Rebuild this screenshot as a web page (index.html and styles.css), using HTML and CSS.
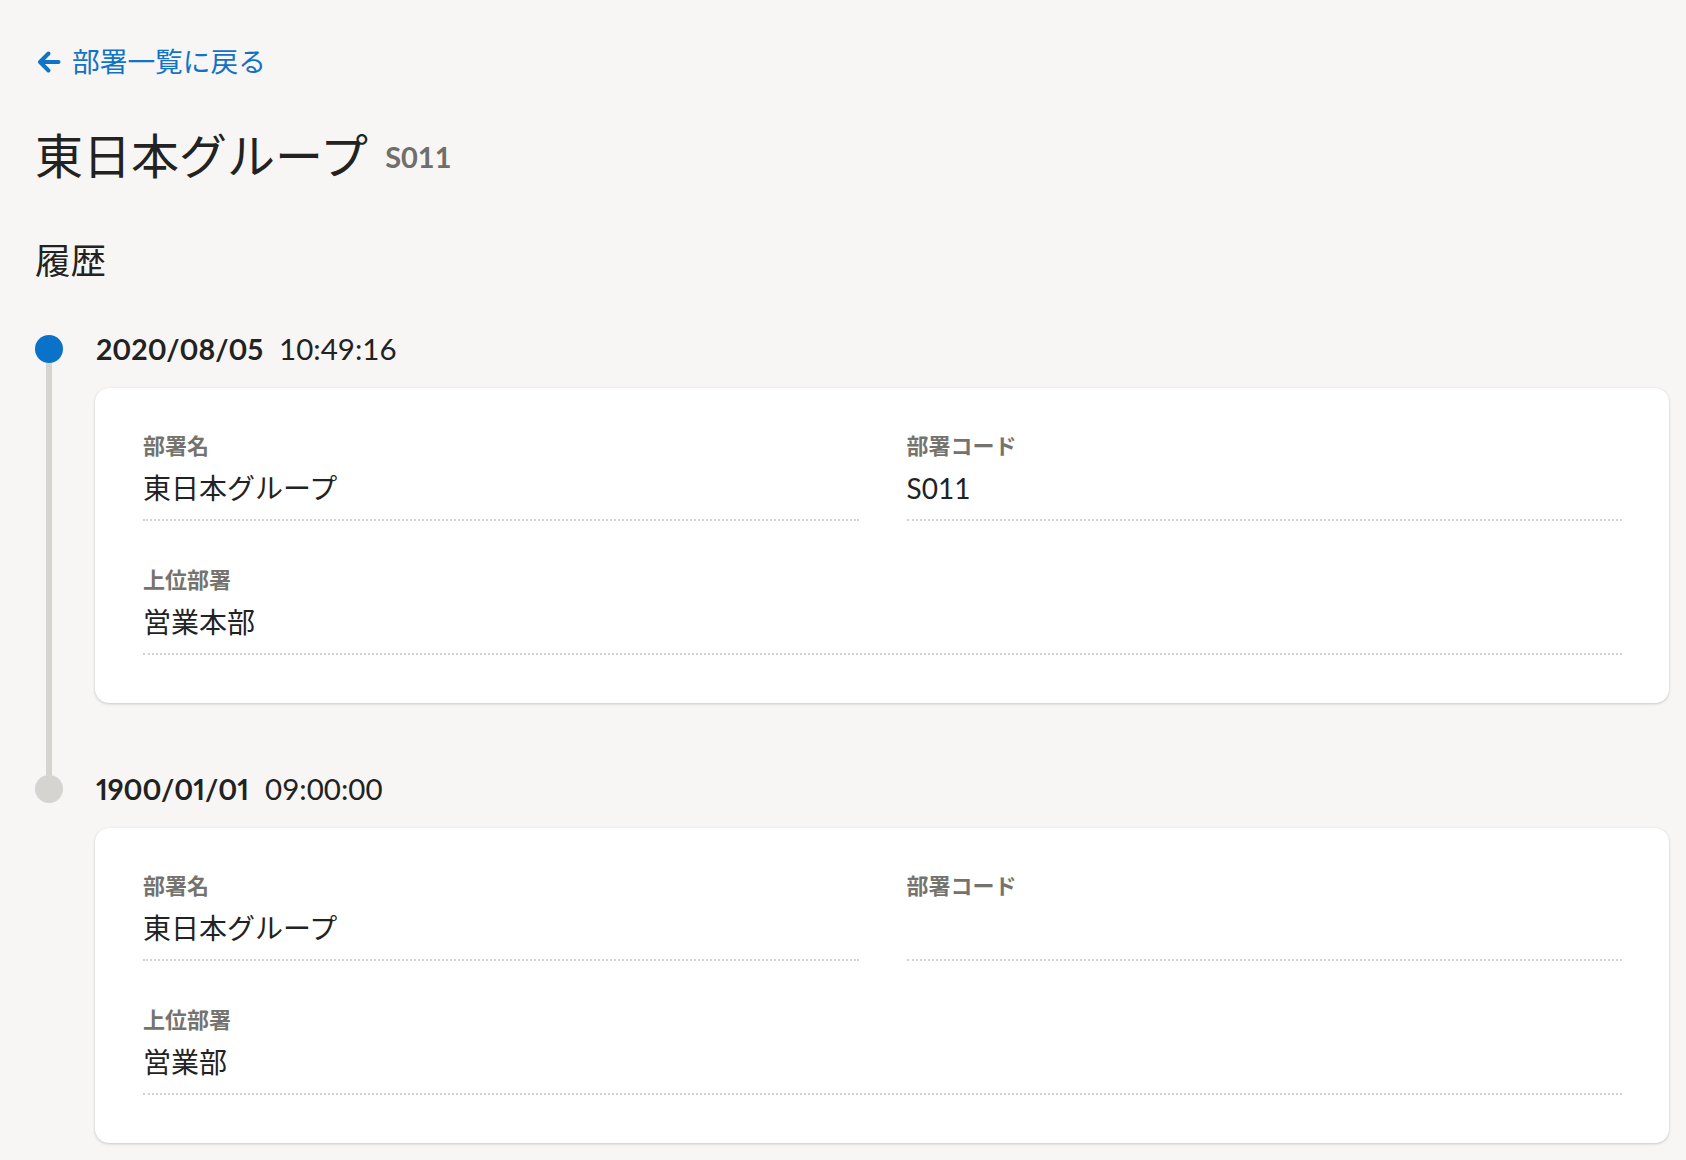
FILE: index.html
```html
<!DOCTYPE html>
<html lang="ja">
<head>
<meta charset="utf-8">
<title>東日本グループ - 履歴</title>
<link rel="stylesheet" href="styles.css">
</head>
<body>
<div class="page">
  <a class="back" href="#">
    <svg class="back-icon" viewBox="0 0 24 24" width="24" height="24" aria-hidden="true">
      <path d="M21.5 12H3.5M11.5 3.5L3 12L11.5 20.5" fill="none" stroke="currentColor" stroke-width="4" stroke-linecap="round" stroke-linejoin="round"/>
    </svg>
    <span>部署一覧に戻る</span>
  </a>
  <h1 class="title"><span class="title-name">東日本グループ</span><span class="title-code">S011</span></h1>
  <h2 class="section">履歴</h2>
  <ol class="timeline">
    <li class="entry entry--first">
      <div class="rail"><span class="rail-top"></span><span class="dot dot--current"></span><span class="rail-line"></span></div>
      <div class="entry-body">
        <div class="stamp"><span class="date">2020/08/05</span><span class="time">10:49:16</span></div>
        <div class="card">
          <dl class="fields">
            <div class="field"><dt>部署名</dt><dd>東日本グループ</dd></div>
            <div class="field"><dt>部署コード</dt><dd>S011</dd></div>
            <div class="field field--wide"><dt>上位部署</dt><dd>営業本部</dd></div>
          </dl>
        </div>
      </div>
    </li>
    <li class="entry entry--last">
      <div class="rail"><span class="rail-top"></span><span class="dot"></span><span class="rail-line"></span></div>
      <div class="entry-body">
        <div class="stamp"><span class="date">1900/01/01</span><span class="time">09:00:00</span></div>
        <div class="card">
          <dl class="fields">
            <div class="field"><dt>部署名</dt><dd>東日本グループ</dd></div>
            <div class="field"><dt>部署コード</dt><dd></dd></div>
            <div class="field field--wide"><dt>上位部署</dt><dd>営業部</dd></div>
          </dl>
        </div>
      </div>
    </li>
  </ol>
</div>
</body>
</html>
```

FILE: styles.css
```css
* { box-sizing: border-box; }

html, body {
  margin: 0;
  padding: 0;
  background: #f7f6f4;
}

body {
  font-family: Lato, "Noto Sans CJK JP", sans-serif;
  color: #222222;
}

.page {
  padding: 44px 17px 0 35px;
  display: flex;
  flex-direction: column;
  align-items: stretch;
}

.back {
  display: inline-flex;
  align-self: flex-start;
  align-items: center;
  gap: 11px;
  height: 36px;
  color: #1173c6;
  text-decoration: none;
  font-size: 27.7px;
  line-height: 36px;
  margin-left: 2px;
}

.back-icon {
  display: block;
  width: 24px;
  height: 24px;
}

.title {
  margin: 46px 0 0;
  height: 60px;
  display: flex;
  align-items: center;
  gap: 17px;
  font-weight: 400;
}

.title-name {
  font-size: 48px;
  line-height: 60px;
  color: #222222;
}

.title-code {
  font-size: 29px;
  font-weight: 700;
  color: #6f6e6a;
  line-height: 60px;
  padding-top: 2px;
}

.section {
  margin: 53px 0 0;
  font-size: 35.5px;
  line-height: 44px;
  font-weight: 400;
  color: #222222;
}

.timeline {
  list-style: none;
  margin: 46px 0 0;
  padding: 0;
}

.entry {
  display: grid;
  grid-template-columns: 28px 1fr;
  column-gap: 32px;
}

.rail {
  display: flex;
  flex-direction: column;
  align-items: center;
}

.rail-top {
  width: 6px;
  height: 6px;
  flex: 0 0 6px;
  background: #d5d4d1;
}

.entry--first .rail-top { background: transparent; }

.dot {
  width: 28px;
  height: 28px;
  flex: 0 0 28px;
  border-radius: 50%;
  background: #d5d4d1;
}

.dot--current { background: #0a72c8; }

.rail-line {
  width: 6px;
  flex: 1 1 auto;
  background: #d5d4d1;
}

.entry--last .rail-line { background: transparent; }

.entry-body {
  display: flex;
  flex-direction: column;
  gap: 19px;
  padding-bottom: 66px;
}

.entry--last .entry-body { padding-bottom: 20px; }

.stamp {
  height: 40px;
  display: flex;
  align-items: center;
  gap: 16px;
  padding-left: 1px;
  line-height: 40px;
  color: #222222;
}

.date {
  font-weight: 700;
  font-size: 28.5px;
  font-variant-numeric: proportional-nums;
}

.time {
  font-weight: 400;
  font-size: 29.5px;
}

.card {
  background: #ffffff;
  border-radius: 14px;
  padding: 44px 47px 48px 48px;
  box-shadow: 0 1px 3px rgba(0, 0, 0, 0.18), 0 0 1px rgba(0, 0, 0, 0.08);
}

.fields {
  margin: 0;
  display: grid;
  grid-template-columns: 1fr 1fr;
  column-gap: 48px;
  row-gap: 45px;
}

.field {
  display: flex;
  flex-direction: column;
  gap: 10px;
  padding-bottom: 13px;
  border-bottom: 2px dotted #d3d3d3;
}

.field--wide { grid-column: 1 / -1; }

.field dt {
  font-size: 22px;
  line-height: 28px;
  font-weight: 700;
  color: #75736e;
}

.field dd {
  margin: 0;
  font-size: 28px;
  line-height: 36px;
  min-height: 36px;
  color: #222222;
}
```
